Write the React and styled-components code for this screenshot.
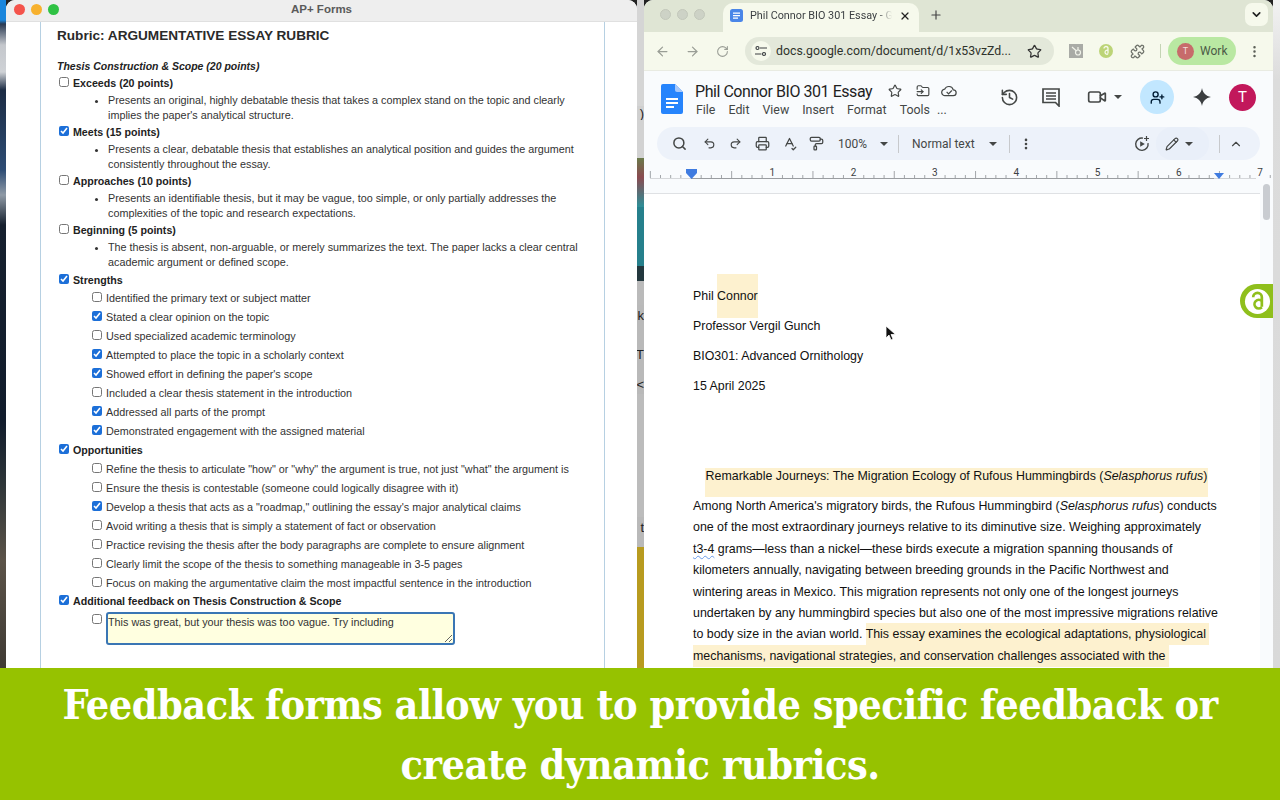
import React from "react";
import styled, { createGlobalStyle } from "styled-components";
import {
  ArrowLeft,
  ArrowRight,
  RotateCw,
  Star,
  Puzzle,
  EllipsisVertical,
  History,
  Video,
  UserPlus,
  Search,
  Undo2,
  Redo2,
  Printer,
  SpellCheck,
  PaintRoller,
  Pencil,
  ChevronUp,
  ChevronDown,
  X,
  Plus,
  FolderInput,
} from "lucide-react";

const GlobalStyle = createGlobalStyle`
  html, body {
    margin: 0;
    padding: 0;
    background: #222;
  }
  * {
    box-sizing: border-box;
  }
`;

const Screen = styled.div`
  position: relative;
  width: 1280px;
  height: 800px;
  overflow: hidden;
  display: flex;
  flex-direction: column;
  font-family: "Liberation Sans", Arial, sans-serif;
`;
const Stage = styled.div`
  flex: 0 0 668px;
  display: flex;
  overflow: hidden;
`;
const LeftEdge = styled.div`
  flex: 0 0 6px;
  background: linear-gradient(
    180deg,
    #1b86dc 0,
    #1b86dc 20px,
    #2a3a52 24px,
    #c4c7cc 45px,
    #cfd2d6 72px,
    #1c2c44 90px,
    #2d4c74 170px,
    #8f9aa6 195px,
    #16202e 225px,
    #111c2c 420px,
    #2c3438 480px,
    #5b5348 560px,
    #3f3a34 668px
  );
`;
const MidStrip = styled.div`
  flex: 0 0 7px;
  width: 7px;
  min-width: 0;
  overflow: hidden;
  display: flex;
  flex-direction: column;
`;
const MidSegment = styled.div`
  height: ${(p) => p.$h}px;
  background: ${(p) => p.$bg};
  display: flex;
  align-items: center;
  justify-content: flex-end;
  overflow: hidden;
  color: #222;
  font-size: 13px;
  line-height: 1;
`;
const RightEdge = styled.div`
  flex: 0 0 7px;
  background: linear-gradient(180deg, #f2f2f2 0, #dcdcdc 80px, #d9d9d9 100%);
`;

/* left window */
const FormWindow = styled.div`
  flex: 0 0 631px;
  background: #fff;
  border-radius: 9px 9px 0 0;
  display: flex;
  flex-direction: column;
  overflow: hidden;
`;
const FormTitleBar = styled.div`
  position: relative;
  flex: 0 0 22px;
  padding-bottom: 4px;
  background: #eeeeee;
  border-bottom: 1px solid #e0e0e0;
  display: flex;
  align-items: center;
  justify-content: center;
  font-size: 11.5px;
  font-weight: 700;
  color: #5a5a5a;
`;
const Lights = styled.div`
  position: absolute;
  left: 8px;
  top: 4px;
  display: flex;
  gap: 6px;
`;
const Light = styled.span`
  width: 11px;
  height: 11px;
  border-radius: 50%;
  background: ${(p) => p.$color};
`;
const Card = styled.div`
  flex: 1;
  width: 565px;
  margin-left: 34px;
  padding: 5px 0 0 16px;
  border-left: 1px solid #b6d0e2;
  border-right: 1px solid #b6d0e2;
  color: #222;
`;
const RubricTitle = styled.h1`
  margin: 0;
  font-size: 13.6px;
  line-height: 18px;
  font-weight: 700;
  color: #2a2a2a;
`;
const SectionTitle = styled.div`
  margin-top: 12.5px;
  height: 17px;
  font-size: 10.5px;
  line-height: 17px;
  font-weight: 700;
  font-style: italic;
`;
const Row = styled.label`
  display: flex;
  align-items: center;
  height: ${(p) => p.$h || 17}px;
  margin-top: ${(p) => p.$mt || 0}px;
  font-size: 10.65px;
  font-weight: 700;
  white-space: nowrap;
`;
const Box = styled.input.attrs({ type: "checkbox", readOnly: true })`
  width: 10px;
  height: 10px;
  margin: 0 4px 2px 2px;
  accent-color: #1c6fd8;
`;
const Bullets = styled.ul`
  margin: 1px 0;
  padding: 0 0 0 51px;
  font-size: 10.8px;
  line-height: 15px;
  color: #333;
`;
const Bullet = styled.li`
  white-space: pre-line;
`;
const SubList = styled.div`
  padding-left: 33px;
`;
const SubRow = styled.label`
  display: flex;
  align-items: center;
  height: 19px;
  font-size: 10.8px;
  color: #333;
  white-space: nowrap;
`;
const FeedbackRow = styled.div`
  display: flex;
  align-items: flex-start;
  margin-top: 2.5px;
  padding-left: 33px;
`;
const FeedbackBox = styled(Box)`
  margin: 2px 4px 0 2px;
`;
const FeedbackInput = styled.textarea`
  width: 349px;
  height: 33px;
  padding: 1px 0 0 0;
  border: 2px solid #3a76b4;
  border-radius: 3px;
  background: #ffffe0;
  font-family: "Liberation Sans", Arial, sans-serif;
  font-size: 10.8px;
  line-height: 14px;
  color: #333;
  outline: none;
  resize: both;
`;

/* right window */
const DocsWindow = styled.div`
  flex: 0 0 629px;
  width: 629px;
  display: flex;
  flex-direction: column;
  border-radius: 9px 9px 0 0;
  overflow: hidden;
  background: #f9fbfd;
`;
const TabStrip = styled.div`
  flex: 0 0 32px;
  display: flex;
  align-items: flex-end;
  padding-left: 16px;
  background: #dfe5d4;
`;
const GreyLights = styled.div`
  align-self: flex-start;
  margin-top: 9px;
  display: flex;
  gap: 6px;
`;
const GreyLight = styled.span`
  width: 11px;
  height: 11px;
  border-radius: 50%;
  background: #cdd2c6;
  border: 1px solid #c2c7ba;
`;
const Tab = styled.div`
  width: 196px;
  height: 29px;
  margin-left: 18px;
  padding: 0 7px 4px;
  display: flex;
  align-items: center;
  background: #f6f9ec;
  border-radius: 10px 10px 0 0;
  font-family: Roboto, sans-serif;
  font-size: 10.8px;
  color: #3c4043;
`;
const TabText = styled.span`
  flex: 0 0 142px;
  margin-left: 7px;
  overflow: hidden;
  white-space: nowrap;
  mask-image: linear-gradient(90deg, #000 128px, transparent 142px);
`;
const Slot = styled.span`
  flex: 0 0 ${(p) => p.$w}px;
  width: ${(p) => p.$w}px;
  margin-left: ${(p) => p.$ml || 0}px;
  display: inline-flex;
  align-items: center;
  justify-content: center;
  color: ${(p) => p.$color || "#444746"};
`;
const TabClose = styled(Slot)`
  margin-left: 7px;
`;
const TabAdd = styled(Slot)`
  align-self: flex-start;
  margin-top: 8px;
`;
const TabMenuButton = styled.span`
  width: 23px;
  height: 23px;
  margin: 0 5px 6px auto;
  display: flex;
  align-items: center;
  justify-content: center;
  background: #f6f9ec;
  border-radius: 7px;
  color: #222;
`;
const AddressBar = styled.div`
  flex: 0 0 39px;
  display: flex;
  align-items: center;
  padding-left: 3px;
  background: #f6f9ec;
  border-bottom: 1px solid #e9ebe2;
`;
const Omnibox = styled.div`
  flex: none;
  width: 309px;
  height: 28px;
  margin-left: 7px;
  padding: 0 8px 0 6px;
  display: flex;
  align-items: center;
  background: #e3e8da;
  border-radius: 14px;
`;
const TuneCircle = styled.span`
  flex: none;
  width: 20px;
  height: 20px;
  border-radius: 50%;
  background: #f6f9ec;
  display: flex;
  align-items: center;
  justify-content: center;
  color: #3c4043;
`;
const Url = styled.span`
  flex: 0 0 235px;
  margin-left: 5px;
  font-family: Roboto, sans-serif;
  font-size: 12.3px;
  color: #2f332c;
  white-space: nowrap;
`;
const ExtSep = styled.span`
  flex: none;
  width: 1px;
  height: 14px;
  margin-left: 11px;
  background: #c4d4b4;
`;
const ProfilePill = styled.div`
  flex: none;
  width: 68px;
  height: 28px;
  margin-left: 7px;
  padding-left: 9px;
  display: flex;
  align-items: center;
  gap: 6px;
  border-radius: 14px;
  background: #b9e8a2;
  font-family: Roboto, sans-serif;
  font-size: 12px;
  color: #4b5a46;
`;
const ProfileDot = styled.span`
  width: 17px;
  height: 17px;
  border-radius: 50%;
  background: #c76b6b;
  color: #f4dddd;
  font-size: 9px;
  display: flex;
  align-items: center;
  justify-content: center;
`;
const DocsHeader = styled.div`
  flex: 0 0 56px;
  display: flex;
  align-items: flex-start;
  padding-left: 17px;
`;
const DocsLogo = styled.span`
  display: block;
  margin-top: 13px;
  flex: none;
`;
const TitleColumn = styled.div`
  margin-left: 12px;
  padding-top: 11px;
`;
const TitleLine = styled.div`
  display: flex;
  align-items: center;
  height: 18px;
`;
const DocTitle = styled.span`
  flex: 0 0 178px;
  font-family: Roboto, sans-serif;
  font-size: 16px;
  letter-spacing: -0.45px;
  color: #1f1f1f;
  white-space: nowrap;
`;
const MenuBar = styled.div`
  display: flex;
  gap: 13px;
  margin: 2px 0 0 1px;
  font-family: Roboto, sans-serif;
  font-size: 12.4px;
  line-height: 16px;
  color: #444746;

  span:last-child {
    margin-left: -6px;
  }
`;
const Actions = styled.div`
  display: flex;
  align-items: center;
  height: 34px;
  margin: 9px 0 0 auto;
  padding-right: 17px;
`;
const ShareButton = styled.span`
  width: 34px;
  height: 34px;
  margin-left: 18px;
  display: flex;
  align-items: center;
  justify-content: center;
  border-radius: 50%;
  background: #c2e7ff;
  color: #001d35;
`;
const Avatar = styled.span`
  width: 27px;
  height: 27px;
  margin-left: 13px;
  display: flex;
  align-items: center;
  justify-content: center;
  border-radius: 50%;
  background: #c2185b;
  color: #fff;
  font-family: Roboto, sans-serif;
  font-size: 15px;
`;
const ToolPill = styled.div`
  flex: 0 0 33px;
  width: 603px;
  margin-left: 13px;
  padding-left: 10px;
  display: flex;
  align-items: center;
  border-radius: 16.5px;
  background: #edf2fa;
  font-family: Roboto, sans-serif;
  font-size: 12px;
  color: #444746;
`;
const ToolText = styled.span`
  flex: 0 0 ${(p) => p.$w}px;
  margin-left: ${(p) => p.$ml}px;
  white-space: nowrap;
`;
const ToolSep = styled.span`
  flex: none;
  width: 1px;
  height: 18px;
  margin-left: ${(p) => p.$ml}px;
  background: #c7c9cc;
`;
const Caret = styled.span`
  flex: none;
  margin-left: ${(p) => p.$ml || 0}px;
  width: 0;
  height: 0;
  border-left: 4px solid transparent;
  border-right: 4px solid transparent;
  border-top: 4px solid #444746;
`;
const PencilGroup = styled.div`
  flex: none;
  width: 53px;
  height: 33px;
  margin-left: 2px;
  padding-left: 9px;
  display: flex;
  align-items: center;
  gap: 6px;
  border-radius: 16px;
  background: #e9eff9;
`;
const DocsBody = styled.div`
  position: relative;
  flex: 1;
  display: flex;
  min-height: 0;
`;
const DocsMain = styled.div`
  flex: 0 0 616px;
  width: 616px;
  display: flex;
  flex-direction: column;
`;
const Ruler = styled.svg`
  display: block;
  flex: none;
  overflow: visible;
`;
const Page = styled.div`
  flex: 1;
  padding: 87px 0 0 49px;
  background: #fff;
  border-top: 1px solid #dfe1e4;
  font-size: 12.4px;
  color: #111;
  white-space: nowrap;
  overflow: hidden;
`;
const HeadLine = styled.div`
  height: 30px;
  line-height: 30px;
`;
const NameMark = styled.span`
  padding: 15px 0;
  background: #fdf1cf;
`;
const EssayTitle = styled.div`
  width: 503px;
  height: 29px;
  margin: 67px 0 0 12px;
  line-height: 16px;
  text-align: center;
  background: #fdf1cf;
`;
const Paragraph = styled.div`
  margin-top: -1px;
`;
const ParaLine = styled.div`
  height: 21.4px;
  line-height: 21.4px;
`;
const Marked = styled.span`
  padding: 4px 3px 4px 0;
  background: #fdf1cf;
`;
const Squiggle = styled.span`
  text-decoration: underline wavy #6a9be8 1px;
  text-underline-offset: 2px;
`;
const Gutter = styled.div`
  flex: 1;
  padding: 24px 3px 0 3px;
`;
const Thumb = styled.div`
  width: 7px;
  height: 36px;
  border-radius: 4px;
  background: #c9ccd1;
`;
const PageCursor = styled.svg`
  position: absolute;
  left: 241px;
  top: 165px;
`;
const AddonTab = styled.div`
  position: absolute;
  right: 0;
  top: 124px;
  width: 33px;
  height: 34px;
  padding-left: 4px;
  display: flex;
  align-items: center;
  border-radius: 17px 0 0 17px;
  background: #8fbf1c;
`;

/* banner */
const Banner = styled.div`
  flex: 0 0 132px;
  padding-top: 7px;
  background: #96c200;
  color: #fff;
  font-family: "DejaVu Serif Condensed", "DejaVu Serif", serif;
  font-weight: 700;
  font-size: 41px;
  letter-spacing: -0.5px;
  line-height: 60px;
  text-align: center;
  white-space: nowrap;
`;

const bands = [
  { h: 108, bg: "#d5d5d5" },
  { h: 14, bg: "#cfcfcf", glyph: ")" },
  { h: 38, bg: "#d2d2d2" },
  { h: 20, bg: "linear-gradient(180deg,#6a7a4a,#8a4a50)" },
  { h: 30, bg: "linear-gradient(180deg,#8a4a50,#2d8f98)" },
  { h: 60, bg: "#26808c" },
  { h: 15, bg: "#23383e" },
  { h: 25, bg: "#bababa" },
  { h: 20, bg: "#b9b9b9", glyph: "k" },
  { h: 20, bg: "#b9b9b9" },
  { h: 20, bg: "#b9b9b9", glyph: "T" },
  { h: 10, bg: "#b9b9b9" },
  { h: 20, bg: "#b9b9b9", glyph: "<" },
  { h: 125, bg: "#bcbcbc" },
  { h: 20, bg: "#b9b9b9", glyph: "t" },
  { h: 10, bg: "#b9b9b9" },
  { h: 123, bg: "#b89b1f" },
];

const levels = [
  {
    label: "Exceeds (20 points)",
    text: "Presents an original, highly debatable thesis that takes a complex stand on the topic and clearly\nimplies the paper's analytical structure.",
  },
  {
    label: "Meets (15 points)",
    checked: true,
    text: "Presents a clear, debatable thesis that establishes an analytical position and guides the argument\nconsistently throughout the essay.",
  },
  {
    label: "Approaches (10 points)",
    text: "Presents an identifiable thesis, but it may be vague, too simple, or only partially addresses the\ncomplexities of the topic and research expectations.",
  },
  {
    label: "Beginning (5 points)",
    text: "The thesis is absent, non-arguable, or merely summarizes the text. The paper lacks a clear central\nacademic argument or defined scope.",
  },
];

const strengths = [
  ["Identified the primary text or subject matter", false],
  ["Stated a clear opinion on the topic", true],
  ["Used specialized academic terminology", false],
  ["Attempted to place the topic in a scholarly context", true],
  ["Showed effort in defining the paper's scope", true],
  ["Included a clear thesis statement in the introduction", false],
  ["Addressed all parts of the prompt", true],
  ["Demonstrated engagement with the assigned material", true],
];

const opportunities = [
  ['Refine the thesis to articulate "how" or "why" the argument is true, not just "what" the argument is', false],
  ["Ensure the thesis is contestable (someone could logically disagree with it)", false],
  ['Develop a thesis that acts as a "roadmap," outlining the essay\'s major analytical claims', true],
  ["Avoid writing a thesis that is simply a statement of fact or observation", false],
  ["Practice revising the thesis after the body paragraphs are complete to ensure alignment", false],
  ["Clearly limit the scope of the thesis to something manageable in 3-5 pages", false],
  ["Focus on making the argumentative claim the most impactful sentence in the introduction", false],
];

const menus = ["File", "Edit", "View", "Insert", "Format", "Tools", "..."];

const DocGlyph = ({ width, height }) => (
  <svg width={width} height={height} viewBox="0 0 22 30">
    <path d="M2 0h12l8 8v20a2 2 0 0 1-2 2H2a2 2 0 0 1-2-2V2a2 2 0 0 1 2-2z" fill="#2684fc" />
    <path d="M14 0l8 8h-6a2 2 0 0 1-2-2z" fill="#a7c8fa" />
    <path d="M5 14h12v2H5zM5 18h12v2H5zM5 22h8v2H5z" fill="#fff" />
  </svg>
);

const SubItems = ({ items }) => (
  <SubList>
    {items.map(([text, checked]) => (
      <SubRow key={text}>
        <Box defaultChecked={checked} />
        {text}
      </SubRow>
    ))}
  </SubList>
);

const RulerMarks = () => {
  const inch = 81.3;
  const zero = 47;
  const ticks = [];
  for (let i = -4; i <= 59; i++) {
    const x = zero + (i * inch) / 8;
    const len = i % 8 === 0 ? 0 : i % 4 === 0 ? 7 : 3;
    if (len) ticks.push(<line key={i} x1={x} x2={x} y1={18 - len} y2={18} stroke="#8d9094" strokeWidth="0.8" />);
  }
  return (
    <Ruler width="616" height="33" viewBox="0 0 616 33">
      <line x1="6" x2="47" y1="18.5" y2="18.5" stroke="#d5d7da" />
      <line x1="47" x2="570" y1="18.5" y2="18.5" stroke="#9a9da1" />
      <line x1="570" x2="612" y1="18.5" y2="18.5" stroke="#d5d7da" />
      {ticks}
      {[1, 2, 3, 4, 5, 6, 7].map((n) => (
        <text key={n} x={zero + n * inch} y="16" textAnchor="middle" fontSize="10" fontFamily="Roboto, sans-serif" fill="#3c4043">
          {n}
        </text>
      ))}
      <path d="M42 9h11v4l-5.500 6-5.500-6z" fill="#3f7be0" />
      <path d="M570 13h10l-5 6z" fill="#3f7be0" />
    </Ruler>
  );
};

const App = () => (
  <Screen>
    <GlobalStyle />
    <Stage>
      <LeftEdge />
      <FormWindow>
        <FormTitleBar>
          <Lights>
            <Light $color="#f4544c" />
            <Light $color="#f7b12e" />
            <Light $color="#2fc244" />
          </Lights>
          AP+ Forms
        </FormTitleBar>
        <Card>
          <RubricTitle>Rubric: ARGUMENTATIVE ESSAY RUBRIC</RubricTitle>
          <SectionTitle>Thesis Construction &amp; Scope (20 points)</SectionTitle>
          {levels.map((level) => (
            <div key={level.label}>
              <Row>
                <Box defaultChecked={level.checked} />
                {level.label}
              </Row>
              <Bullets>
                <Bullet>{level.text}</Bullet>
              </Bullets>
            </div>
          ))}
          <Row $mt={2}>
            <Box defaultChecked />
            Strengths
          </Row>
          <SubItems items={strengths} />
          <Row $h={19}>
            <Box defaultChecked />
            Opportunities
          </Row>
          <SubItems items={opportunities} />
          <Row>
            <Box defaultChecked />
            Additional feedback on Thesis Construction &amp; Scope
          </Row>
          <FeedbackRow>
            <FeedbackBox />
            <FeedbackInput defaultValue="This was great, but your thesis was too vague. Try including" />
          </FeedbackRow>
        </Card>
      </FormWindow>
      <MidStrip>
        {bands.map((band, i) => (
          <MidSegment key={i} $h={band.h} $bg={band.bg}>
            {band.glyph}
          </MidSegment>
        ))}
      </MidStrip>
      <DocsWindow>
        <TabStrip>
          <GreyLights>
            <GreyLight />
            <GreyLight />
            <GreyLight />
          </GreyLights>
          <Tab>
            <svg width="13" height="13" viewBox="0 0 13 13">
              <rect width="13" height="13" rx="2.500" fill="#4a86e8" />
              <path d="M3 3.500h7v1.200H3zM3 6h7v1.200H3zM3 8.500h5v1.200H3z" fill="#fff" />
            </svg>
            <TabText>Phil Connor BIO 301 Essay - G</TabText>
            <TabClose $w={12} $color="#222">
              <X size={12} strokeWidth={2.5} />
            </TabClose>
          </Tab>
          <TabAdd $w={20} $ml={7} $color="#444">
            <Plus size={14} />
          </TabAdd>
          <TabMenuButton>
            <ChevronDown size={13} strokeWidth={3} />
          </TabMenuButton>
        </TabStrip>
        <AddressBar>
          <Slot $w={30} $color="#9a9e96">
            <ArrowLeft size={15} />
          </Slot>
          <Slot $w={30} $color="#9a9e96">
            <ArrowRight size={15} />
          </Slot>
          <Slot $w={31} $color="#9a9e96">
            <RotateCw size={13} />
          </Slot>
          <Omnibox>
            <TuneCircle>
              <svg width="12" height="12" viewBox="0 0 12 12" fill="none" stroke="#3c4043" strokeWidth="1.200">
                <circle cx="2.500" cy="3" r="1.500" />
                <path d="M5 3h7M0 9h6.500" />
                <circle cx="9" cy="9" r="1.500" />
              </svg>
            </TuneCircle>
            <Url>docs.google.com/document/d/1x53vzZd...</Url>
            <Slot $w={16} $ml={15} $color="#333">
              <Star size={15} />
            </Slot>
          </Omnibox>
          <Slot $w={24} $ml={10}>
            <svg width="14" height="14" viewBox="0 0 14 14">
              <rect width="14" height="14" fill="#a9aba6" />
              <circle cx="9" cy="8.500" r="2.500" fill="none" stroke="#f1f3ea" strokeWidth="1.200" />
              <path d="M3 3l4.500 4M9 3v3" stroke="#f1f3ea" strokeWidth="1.200" />
            </svg>
          </Slot>
          <Slot $w={24} $ml={6}>
            <svg width="14" height="14" viewBox="0 0 14 14">
              <circle cx="7" cy="7" r="7" fill="#bcd477" />
              <path d="M5 4.500a2 2 0 0 1 4 0v5M9 6.500a2 2 0 1 0 0 3.500" fill="none" stroke="#f6f9ec" strokeWidth="1.300" />
            </svg>
          </Slot>
          <Slot $w={24} $ml={7} $color="#6e726a">
            <Puzzle size={15} />
          </Slot>
          <ExtSep />
          <ProfilePill>
            <ProfileDot>T</ProfileDot>
            Work
          </ProfilePill>
          <Slot $w={20} $ml={8} $color="#5a5e56">
            <EllipsisVertical size={15} />
          </Slot>
        </AddressBar>
        <DocsHeader>
          <DocsLogo>
            <DocGlyph width={22} height={30} />
          </DocsLogo>
          <TitleColumn>
            <TitleLine>
              <DocTitle>Phil Connor BIO 301 Essay</DocTitle>
              <Slot $w={20} $ml={12}>
                <Star size={14} />
              </Slot>
              <Slot $w={36}>
                <FolderInput size={14} />
              </Slot>
              <Slot $w={16}>
                <svg width="17" height="14" viewBox="0 0 17 14" fill="none" stroke="#444746" strokeWidth="1.300">
                  <path d="M4.500 12a3.500 3.500 0 0 1-.5-7 4.800 4.800 0 0 1 9 .8 3.100 3.100 0 0 1 0 6.200z" />
                  <path d="M6 8l2 2 3.500-3.500" />
                </svg>
              </Slot>
            </TitleLine>
            <MenuBar>
              {menus.map((menu) => (
                <span key={menu}>{menu}</span>
              ))}
            </MenuBar>
          </TitleColumn>
          <Actions>
            <Slot $w={24}>
              <History size={19} />
            </Slot>
            <Slot $w={24} $ml={18}>
              <svg width="18" height="19" viewBox="0 0 18 19" fill="none" stroke="#444746" strokeWidth="1.700">
                <path d="M1 1h16v17l-3.500-3.500H1z" />
                <path d="M4 5h10M4 8h10M4 11h10" />
              </svg>
            </Slot>
            <Slot $w={24} $ml={22}>
              <Video size={20} />
            </Slot>
            <Caret $ml={5} />
            <ShareButton>
              <UserPlus size={15} strokeWidth={2.2} />
            </ShareButton>
            <Slot $w={28} $ml={14}>
              <svg width="18" height="18" viewBox="0 0 18 18">
                <path d="M9 0c.8 5 4 8.200 9 9-5 .8-8.200 4-9 9-.8-5-4-8.200-9-9 5-.8 8.200-4 9-9z" fill="#3c3f41" />
              </svg>
            </Slot>
            <Avatar>T</Avatar>
          </Actions>
        </DocsHeader>
        <ToolPill>
          <Slot $w={24}>
            <Search size={15} strokeWidth={2.4} />
          </Slot>
          <Slot $w={24} $ml={6}>
            <Undo2 size={13} />
          </Slot>
          <Slot $w={24} $ml={2}>
            <Redo2 size={13} />
          </Slot>
          <Slot $w={24} $ml={3}>
            <Printer size={15} />
          </Slot>
          <Slot $w={24} $ml={3}>
            <SpellCheck size={15} />
          </Slot>
          <Slot $w={24} $ml={3}>
            <PaintRoller size={15} />
          </Slot>
          <ToolText $w={32} $ml={10}>
            100%
          </ToolText>
          <Caret $ml={10} />
          <ToolSep $ml={10} />
          <ToolText $w={65} $ml={13}>
            Normal text
          </ToolText>
          <Caret $ml={12} />
          <ToolSep $ml={12} />
          <Slot $w={16} $ml={8}>
            <EllipsisVertical size={14} strokeWidth={2.5} />
          </Slot>
          <Slot $w={24} $ml={96}>
            <svg width="16" height="16" viewBox="0 0 16 16">
              <path d="M9 2.100a6.200 6.200 0 1 0 5 5" fill="none" stroke="#444746" strokeWidth="1.400" />
              <path d="M6.200 5.200v5.600l4.600-2.800z" fill="#444746" />
              <path d="M12.500 0v5M10 2.500h5" stroke="#444746" strokeWidth="1.200" />
            </svg>
          </Slot>
          <PencilGroup>
            <Pencil size={14} color="#444746" />
            <Caret />
          </PencilGroup>
          <ToolSep $ml={10} />
          <Slot $w={20} $ml={6}>
            <ChevronUp size={14} />
          </Slot>
        </ToolPill>
        <DocsBody>
          <DocsMain>
            <RulerMarks />
            <Page>
              <HeadLine>
                Phil <NameMark>Connor</NameMark>
              </HeadLine>
              <HeadLine>Professor Vergil Gunch</HeadLine>
              <HeadLine>BIO301: Advanced Ornithology</HeadLine>
              <HeadLine>15 April 2025</HeadLine>
              <EssayTitle>
                Remarkable Journeys: The Migration Ecology of Rufous Hummingbirds (<i>Selasphorus rufus</i>)
              </EssayTitle>
              <Paragraph>
                <ParaLine>
                  Among North America's migratory birds, the Rufous Hummingbird (<i>Selasphorus rufus</i>) conducts
                </ParaLine>
                <ParaLine>one of the most extraordinary journeys relative to its diminutive size. Weighing approximately</ParaLine>
                <ParaLine>
                  <Squiggle>t3-4</Squiggle> grams—less than a nickel—these birds execute a migration spanning thousands of
                </ParaLine>
                <ParaLine>kilometers annually, navigating between breeding grounds in the Pacific Northwest and</ParaLine>
                <ParaLine>wintering areas in Mexico. This migration represents not only one of the longest journeys</ParaLine>
                <ParaLine>undertaken by any hummingbird species but also one of the most impressive migrations relative</ParaLine>
                <ParaLine>
                  to body size in the avian world. <Marked>This essay examines the ecological adaptations, physiological</Marked>
                </ParaLine>
                <ParaLine>
                  <Marked>mechanisms, navigational strategies, and conservation challenges associated with the</Marked>
                </ParaLine>
              </Paragraph>
            </Page>
          </DocsMain>
          <Gutter>
            <Thumb />
          </Gutter>
          <PageCursor width="12" height="16" viewBox="0 0 12 16">
            <path d="M1 1v12l3-3 2 5 2-1-2-4.500h4.500z" fill="#111" stroke="#fff" strokeWidth="0.800" />
          </PageCursor>
          <AddonTab>
            <svg width="27" height="27" viewBox="0 0 28 28">
              <circle cx="14" cy="14" r="13" fill="#fff" />
              <path d="M9.500 9.500a4.500 4.500 0 0 1 9 0v10M18.500 13.500a4.500 4.500 0 1 0 0 6.500" fill="none" stroke="#8fbf1c" strokeWidth="2.800" />
            </svg>
          </AddonTab>
        </DocsBody>
      </DocsWindow>
      <RightEdge />
    </Stage>
    <Banner>
      Feedback forms allow you to provide specific feedback or
      <br />
      create dynamic rubrics.
    </Banner>
  </Screen>
);

export default App;
